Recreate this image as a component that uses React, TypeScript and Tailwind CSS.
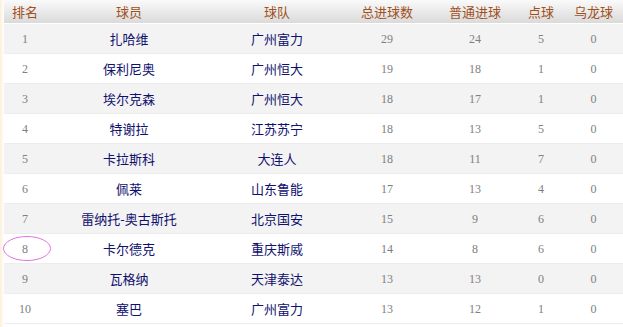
import React from "react";

type Row = [number, string, string, number, number, number, number];

const rows: Row[] = [
  [1, "扎哈维", "广州富力", 29, 24, 5, 0],
  [2, "保利尼奥", "广州恒大", 19, 18, 1, 0],
  [3, "埃尔克森", "广州恒大", 18, 17, 1, 0],
  [4, "特谢拉", "江苏苏宁", 18, 13, 5, 0],
  [5, "卡拉斯科", "大连人", 18, 11, 7, 0],
  [6, "佩莱", "山东鲁能", 17, 13, 4, 0],
  [7, "雷纳托-奥古斯托", "北京国安", 15, 9, 6, 0],
  [8, "卡尔德克", "重庆斯威", 14, 8, 6, 0],
  [9, "瓦格纳", "天津泰达", 13, 13, 0, 0],
  [10, "塞巴", "广州富力", 13, 12, 1, 0],
];

const cols = ["w-[42px]", "w-[166px]", "w-[130px]", "w-[90px]", "w-[86px]", "w-[46px]", "w-[59px]"];
const heads = ["排名", "球员", "球队", "总进球数", "普通进球", "点球", "乌龙球"];

const cjk = { fontFamily: '"Microsoft YaHei", "Noto Sans CJK SC", sans-serif' };

export default function App() {
  return (
    <div className="relative flex w-[623px] h-[327px] bg-white overflow-hidden">
      {/* left cream strip */}
      <div className="w-[4px] shrink-0 bg-gradient-to-r from-[#fcefd8] to-white" />
      <div className="flex-1">
        <div className="flex h-[24px] bg-gradient-to-b from-[#fafafa] to-[#dadada] border-b border-white" style={cjk}>
          {heads.map((h, i) => (
            <div key={h} className={`${cols[i]} flex items-center justify-center text-[13px] text-[#a0501c]`}>
              {h}
            </div>
          ))}
        </div>
        {rows.map((r, idx) => (
          <div
            key={r[0]}
            className={`flex h-[30px] border-b border-[#ededed] ${idx % 2 === 0 ? "bg-[#f3f3f3]" : "bg-white"}`}
          >
            {r.map((v, i) => (
              <div
                key={i}
                className={`${cols[i]} flex items-center justify-center ${
                  i === 1 || i === 2
                    ? "text-[13px] text-[#10106e]"
                    : "text-[12px] text-[#808080] font-['Liberation_Serif',serif]"
                }`}
                style={i === 1 || i === 2 ? cjk : undefined}
              >
                {v}
              </div>
            ))}
          </div>
        ))}
      </div>
      {/* highlight ring around rank 8 */}
      <svg className="absolute left-[2px] top-[235px]" width="50" height="27" viewBox="0 0 50 27">
        <ellipse cx="25" cy="13.5" rx="23.5" ry="12" fill="none" stroke="#dd77dd" strokeWidth="1" />
      </svg>
    </div>
  );
}
